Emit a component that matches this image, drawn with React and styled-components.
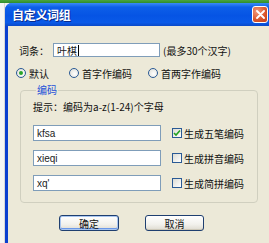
import React from "react";
import styled, { createGlobalStyle } from "styled-components";

const GlobalStyle = createGlobalStyle`
  html, body { margin: 0; padding: 0; }
  body {
    width: 269px; height: 243px; overflow: hidden; background: #f4f4f4;
    font-family: "Noto Sans CJK SC", "Noto Sans", sans-serif;
  }
`;

const Screen = styled.div`
  width: 269px; height: 243px; overflow: hidden;
  display: flex; flex-direction: column; background: #f3f3f1;
`;
const TopStrip = styled.div`
  height: 3px; flex: none;
  background: linear-gradient(#4aa63f, #2f8d2c);
`;
const Stage = styled.div`
  flex: 1; display: flex; min-height: 0;
`;
const BackStrip = styled.div`
  width: 5px; flex: none; background: #f6f6f4;
  border-right: 1px solid #d8d8d8; box-sizing: border-box;
`;
const Window = styled.div`
  width: 275px; flex: none; display: flex; flex-direction: column;
  background: linear-gradient(90deg, #0a3fcf, #1660ea 60%, #0a52e0);
  border-radius: 7px 7px 0 0; overflow: hidden;
`;
const TitleBar = styled.div`
  height: 23px; flex: none; display: flex; align-items: center;
  justify-content: space-between; padding: 0 12px 0 7px;
  background: linear-gradient(#3a8cf7 0%, #0d5fe8 18%, #0654e4 55%, #0a5ae8 85%, #0a49c8 100%);
`;
const Title = styled.span`
  color: #fff; font-size: 12px; font-weight: bold; letter-spacing: -0.3px;
  text-shadow: 1px 1px 0 #0a2a8a;
`;
const CloseButton = styled.div`
  width: 16px; height: 17px; box-sizing: border-box;
  border: 1px solid #fff; border-radius: 3px;
  background: radial-gradient(circle at 30% 30%, #f19a7c, #d8532a 60%, #c0401c);
  display: flex; align-items: center; justify-content: center;
`;
const Body = styled.div`
  flex: 1; margin-left: 3px; background: #ece9d8;
  display: flex; flex-direction: column; padding: 17px 0 0 11px;
  font-size: 10px; color: #111;
`;
const FieldRow = styled.div`
  display: flex; align-items: center; height: 14px;
`;
const Label = styled.span`
  width: 34px; white-space: nowrap;
`;
const TextBox = styled.div`
  width: ${p => p.$w}px; height: ${p => p.$h}px; box-sizing: border-box;
  background: #fff; border: 1px solid #7f9db9;
  display: flex; align-items: center; padding: 0 3px;
  font-family: ${p => (p.$latin ? '"Liberation Sans", Arial, sans-serif' : '"Noto Sans CJK SC", sans-serif')};
  font-size: 10px; color: #222; flex: none;
`;
const Caret = styled.span`
  display: inline-block; width: 1px; height: 11px; background: #000; margin-left: 1px;
`;
const Hint = styled.span`
  margin-left: 3px; white-space: nowrap;
`;
const RadioRow = styled.div`
  display: flex; align-items: center; height: 16px; margin: 8px 0 0 -3px;
`;
const RadioItem = styled.label`
  display: flex; align-items: center; gap: 3px; width: ${p => (p.$w ? `${p.$w}px` : "auto")};
  white-space: nowrap; flex: none;
`;
const RadioCircle = styled.span`
  width: 10px; height: 10px; box-sizing: border-box; border-radius: 50%;
  border: 1px solid #2a5a95;
  background: radial-gradient(circle at 60% 60%, #fff, #dcdcd4);
  display: flex; align-items: center; justify-content: center;
  &::after {
    content: ""; width: 4px; height: 4px; border-radius: 50%;
    background: ${p => (p.$checked ? "#2aa52a" : "transparent")};
  }
`;
const GroupBox = styled.fieldset`
  margin: 2px 0 0 1px; padding: 0 0 11px 12px; width: 238px; box-sizing: border-box;
  border: 1px solid #d0cfbf; border-radius: 4px;
  display: flex; flex-direction: column;
`;
const Legend = styled.legend`
  color: #1b50d8; padding: 0 1px; margin-left: 3px; line-height: 14px; font-size: 10px;
`;
const Tip = styled.div`
  line-height: 14px; margin-top: 3px; white-space: nowrap;
`;
const CodeList = styled.div`
  display: flex; flex-direction: column; gap: 9px; margin-top: 11px;
`;
const CodeRow = styled.div`
  display: flex; align-items: center; gap: 11px;
`;
const Check = styled.label`
  display: flex; align-items: center; gap: 2px; white-space: nowrap;
`;
const CheckBox = styled.span`
  width: 10px; height: 10px; box-sizing: border-box; border: 1px solid #2a5a95;
  background: linear-gradient(135deg, #dcdcd4, #fff);
  display: flex; align-items: center; justify-content: center;
`;
const ButtonRow = styled.div`
  display: flex; gap: 26px; margin: 12px 0 0 40px;
`;
const Button = styled.div`
  width: ${p => p.$w}px; height: 16px; box-sizing: border-box;
  border: 1px solid #1f3f70; border-radius: 3px;
  background: linear-gradient(#ffffff, #f2f1ec 60%, #dedbd0);
  display: flex; align-items: center; justify-content: center;
  font-size: 10px; color: #111;
  box-shadow: ${p => (p.$default ? "inset 0 0 0 1px #a9c6f0, inset 0 -1px 0 1px #6a97e8" : "inset 0 -1px 0 #cdc8b8")};
`;

const codes = [
  { value: "kfsa", label: "生成五笔编码", checked: true },
  { value: "xieqi", label: "生成拼音编码", checked: false },
  { value: "xq'", label: "生成简拼编码", checked: false },
];

export default function App() {
  return (
    <>
      <GlobalStyle />
      <Screen>
        <TopStrip />
        <Stage>
          <BackStrip />
          <Window>
            <TitleBar>
              <Title>自定义词组</Title>
              <CloseButton>
                <svg width="9" height="9" viewBox="0 0 9 9">
                  <path d="M1 1 L8 8 M8 1 L1 8" stroke="#fff" strokeWidth="1.8" strokeLinecap="round" />
                </svg>
              </CloseButton>
            </TitleBar>
            <Body>
              <FieldRow>
                <Label>词条：</Label>
                <TextBox $w={107} $h={14}>叶棋<Caret /></TextBox>
                <Hint>(最多30个汉字)</Hint>
              </FieldRow>
              <RadioRow>
                <RadioItem $w={53}><RadioCircle $checked />默认</RadioItem>
                <RadioItem $w={79}><RadioCircle />首字作编码</RadioItem>
                <RadioItem><RadioCircle />首两字作编码</RadioItem>
              </RadioRow>
              <GroupBox>
                <Legend>编码</Legend>
                <Tip>提示：编码为a-z(1-24)个字母</Tip>
                <CodeList>
                  {codes.map(c => (
                    <CodeRow key={c.value}>
                      <TextBox $w={128} $h={16} $latin>{c.value}</TextBox>
                      <Check>
                        <CheckBox>
                          {c.checked && (
                            <svg width="8" height="8" viewBox="0 0 8 8">
                              <path d="M1 4 L3 6 L7 1.5" fill="none" stroke="#21a121" strokeWidth="1.6" />
                            </svg>
                          )}
                        </CheckBox>
                        {c.label}
                      </Check>
                    </CodeRow>
                  ))}
                </CodeList>
              </GroupBox>
              <ButtonRow>
                <Button $w={60} $default>确定</Button>
                <Button $w={59}>取消</Button>
              </ButtonRow>
            </Body>
          </Window>
        </Stage>
      </Screen>
    </>
  );
}
